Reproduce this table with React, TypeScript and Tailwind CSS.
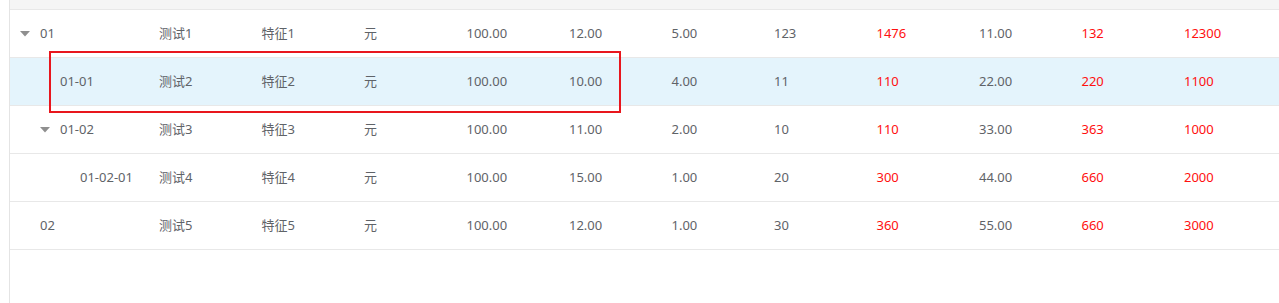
import React from 'react';

type Row = {
  code: string;
  level: number;
  expandable: boolean;
  name: string;
  spec: string;
  unit: string;
  vals: string[];
  highlight?: boolean;
};

const rows: Row[] = [
  { code: '01', level: 0, expandable: true, name: '测试1', spec: '特征1', unit: '元', vals: ['100.00', '12.00', '5.00', '123', '1476', '11.00', '132', '12300'] },
  { code: '01-01', level: 1, expandable: false, name: '测试2', spec: '特征2', unit: '元', vals: ['100.00', '10.00', '4.00', '11', '110', '22.00', '220', '1100'], highlight: true },
  { code: '01-02', level: 1, expandable: true, name: '测试3', spec: '特征3', unit: '元', vals: ['100.00', '11.00', '2.00', '10', '110', '33.00', '363', '1000'] },
  { code: '01-02-01', level: 2, expandable: false, name: '测试4', spec: '特征4', unit: '元', vals: ['100.00', '15.00', '1.00', '20', '300', '44.00', '660', '2000'] },
  { code: '02', level: 0, expandable: false, name: '测试5', spec: '特征5', unit: '元', vals: ['100.00', '12.00', '1.00', '30', '360', '55.00', '660', '3000'] },
];

// amount columns shown in red
const redCols = [4, 6, 7];

const indent = ['pl-0', 'pl-5', 'pl-10'];

const Caret = () => (
  <svg width="10" height="6" viewBox="0 0 10 6" className="block">
    <polygon points="0,0 10,0 5,5.5" fill="#8f8f8f" />
  </svg>
);

export default function App() {
  return (
    <div
      className="relative h-[303px] w-[1279px] overflow-hidden bg-white pl-[9px] text-[13px] text-[#5f6368]"
      style={{ fontFamily: '"Noto Sans", "Noto Sans CJK SC", sans-serif' }}
    >
      <div className="h-full border-l border-[#e4e4e4]">
        <div className="h-[10px] border-b border-[#e8e8e8] bg-[#f5f5f5]" />
        {rows.map((r) => (
          <div
            key={r.code}
            className={`grid h-[48px] grid-cols-[139px_repeat(11,102.5px)] items-center border-b border-[#e8e8e8] ${r.highlight ? 'bg-[#e4f4fc]' : 'bg-white'}`}
          >
            <div className="px-[10px]">
              <div className={`flex items-center ${indent[r.level]}`}>
                <span className="flex w-5 shrink-0 items-center">{r.expandable && <Caret />}</span>
                <span className="whitespace-nowrap">{r.code}</span>
              </div>
            </div>
            <div className="px-[10px] whitespace-nowrap">{r.name}</div>
            <div className="px-[10px] whitespace-nowrap">{r.spec}</div>
            <div className="px-[10px] whitespace-nowrap">{r.unit}</div>
            {r.vals.map((v, i) => (
              <div key={i} className={`px-[10px] whitespace-nowrap ${redCols.includes(i) ? 'text-[#ff1010]' : ''}`}>
                {v}
              </div>
            ))}
          </div>
        ))}
      </div>
      {/* annotation box */}
      <div className="pointer-events-none absolute left-[49px] top-[51px] h-[62px] w-[572px] border-2 border-[#e8161d]" />
    </div>
  );
}
